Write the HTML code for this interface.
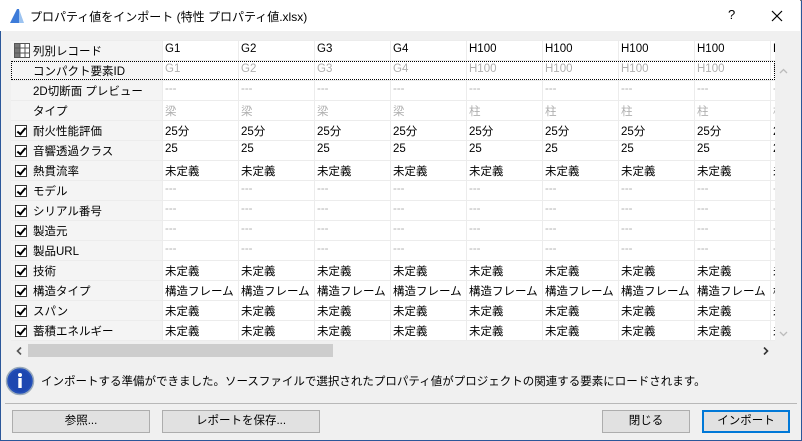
<!DOCTYPE html>
<html><head><meta charset="utf-8"><style>
*{margin:0;padding:0;box-sizing:border-box}
body{width:802px;height:441px;overflow:hidden;background:#f0f0f0;font-family:"Liberation Sans","Noto Sans CJK JP",sans-serif;font-size:11.5px;color:#000;position:relative}
.win{position:absolute;left:0;top:0;width:802px;height:441px;border:1px solid #2b579a;border-top:1px solid #777;}
.title{position:absolute;left:0;top:0;width:800px;height:31px;background:#fff}
.title .t{position:absolute;left:30px;top:8px;font-size:12px}
.abs{position:absolute}
.tbl{position:absolute;left:11px;top:40px;width:764px;height:301px;background:#fff;overflow:hidden}
.row{position:absolute;left:0;height:20px;width:764px}
.lab{position:absolute;left:0;top:0;width:151px;height:19px;background:#f4f4f4}
.lab span{position:absolute;left:22px;top:2px}
.cb{position:absolute;left:4px;top:4px;width:12px;height:12px;border:1px solid #333;background:#fff}
.cb:after{content:"";position:absolute;left:3px;top:0px;width:3px;height:7px;border:solid #000;border-width:0 2px 2px 0;transform:rotate(40deg)}
.c{position:absolute;top:0;width:75px;height:19px;background:#fff;padding:2px 0 0 2px;white-space:nowrap;overflow:hidden}
.g{color:#b0b0b0}
.btn{position:absolute;top:410px;height:23px;background:#e1e1e1;border:1px solid #adadad;text-align:center;line-height:20px}
</style></head><body>
<div class="win"></div>
<div class="title">
<svg class="abs" style="left:9px;top:8px" width="16" height="16"><path d="M1 15 L8 1 L10 1 L10 15Z" fill="#3d7bd9"/><path d="M10 1 L15 15 L10 15Z" fill="#9cc3f0"/></svg>
<div class="t">プロパティ値をインポート (特性 プロパティ値.xlsx)</div>
<div class="abs" style="left:728px;top:7px;font-size:13px">?</div>
<svg class="abs" style="left:771px;top:10px" width="12" height="12"><path d="M1 1L11 11M11 1L1 11" stroke="#000" stroke-width="1.2"/></svg>
</div>
<div class="tbl" id="t"></div>
<div class="abs" style="left:11px;top:61px;width:764px;height:19px;border:1px dotted #000"></div>
<div class="abs" style="left:776px;top:40px;width:15px;height:301px;background:#f0f0f0"></div>
<svg class="abs" style="left:779px;top:68px" width="9" height="6"><path d="M1 5L4.5 1.5L8 5" stroke="#bbb" fill="none" stroke-width="1.3"/></svg>
<svg class="abs" style="left:779px;top:331px" width="9" height="6"><path d="M1 1L4.5 4.5L8 1" stroke="#bbb" fill="none" stroke-width="1.3"/></svg>
<div class="abs" style="left:11px;top:343px;width:764px;height:15px;background:#f0f0f0"></div>
<div class="abs" style="left:28px;top:344px;width:305px;height:13px;background:#cdcdcd"></div>
<svg class="abs" style="left:16px;top:347px" width="6" height="8"><path d="M5 0.5L1.5 4L5 7.5" stroke="#555" fill="none" stroke-width="1.6"/></svg>
<svg class="abs" style="left:763px;top:347px" width="6" height="8"><path d="M1 0.5L4.5 4L1 7.5" stroke="#333" fill="none" stroke-width="1.6"/></svg>
<svg class="abs" style="left:5px;top:366px" width="30" height="30"><circle cx="15" cy="15" r="13.5" fill="#2550b8" stroke="#9ab" stroke-width="1.5"/><circle cx="15" cy="15" r="11" fill="#1d47b0"/><circle cx="15" cy="9" r="2" fill="#fff"/><rect x="13.3" y="12" width="3.4" height="10" fill="#fff"/></svg>
<div class="abs" style="left:41px;top:373px">インポートする準備ができました。ソースファイルで選択されたプロパティ値がプロジェクトの関連する要素にロードされます。</div>
<div class="abs" style="left:5px;top:403px;width:792px;height:1px;background:#b8b8b8"></div>
<div class="btn" style="left:12px;width:138px">参照...</div>
<div class="btn" style="left:162px;width:158px">レポートを保存...</div>
<div class="btn" style="left:602px;width:88px">閉じる</div>
<div class="btn" style="left:702px;width:88px;border:2px solid #0078d7;line-height:19px">インポート</div>
<script>
var rows=[
["列別レコード","H",["G1","G2","G3","G4","H100","H100","H100","H100","H"],""],
["コンパクト要素ID","",["G1","G2","G3","G4","H100","H100","H100","H100","H"],"g"],
["2D切断面 プレビュー","",Array(9).fill("---"),"g"],
["タイプ","",["梁","梁","梁","梁","柱","柱","柱","柱","柱"],"g"],
["耐火性能評価","c",Array(9).fill("25分"),""],
["音響透過クラス","c",Array(9).fill("25"),""],
["熱貫流率","c",Array(9).fill("未定義"),""],
["モデル","c",Array(9).fill("---"),"g"],
["シリアル番号","c",Array(9).fill("---"),"g"],
["製造元","c",Array(9).fill("---"),"g"],
["製品URL","c",Array(9).fill("---"),"g"],
["技術","c",Array(9).fill("未定義"),""],
["構造タイプ","c",Array(9).fill("構造フレーム"),""],
["スパン","c",Array(9).fill("未定義"),""],
["蓄積エネルギー","c",Array(9).fill("未定義"),""]];
var h="";
rows.forEach(function(r,i){
 var y=i*20+1;
 h+='<div class="row" style="top:'+y+'px"><div class="lab">';
 if(r[1]=="c")h+='<div class="cb"></div>';
 if(r[1]=="H")h+='<svg style="position:absolute;left:3px;top:2px" width="16" height="15"><rect x="0.5" y="0.5" width="15" height="14" fill="#fff" stroke="#555"/><rect x="1" y="1" width="5" height="13" fill="#777"/><path d="M0 5H16M0 10H16M6 0V15M11 0V15" stroke="#555"/></svg>';
 h+='<span>'+r[0]+'</span></div>';
 r[2].forEach(function(v,j){h+='<div class="c '+r[3]+'" style="left:'+(152+j*76)+'px">'+v+'</div>';});
 h+='</div>';
});
document.getElementById('t').innerHTML='<div class="abs" style="left:0;top:0;width:764px;height:301px;background:#ececec"></div>'+h;
</script>
</body></html>
